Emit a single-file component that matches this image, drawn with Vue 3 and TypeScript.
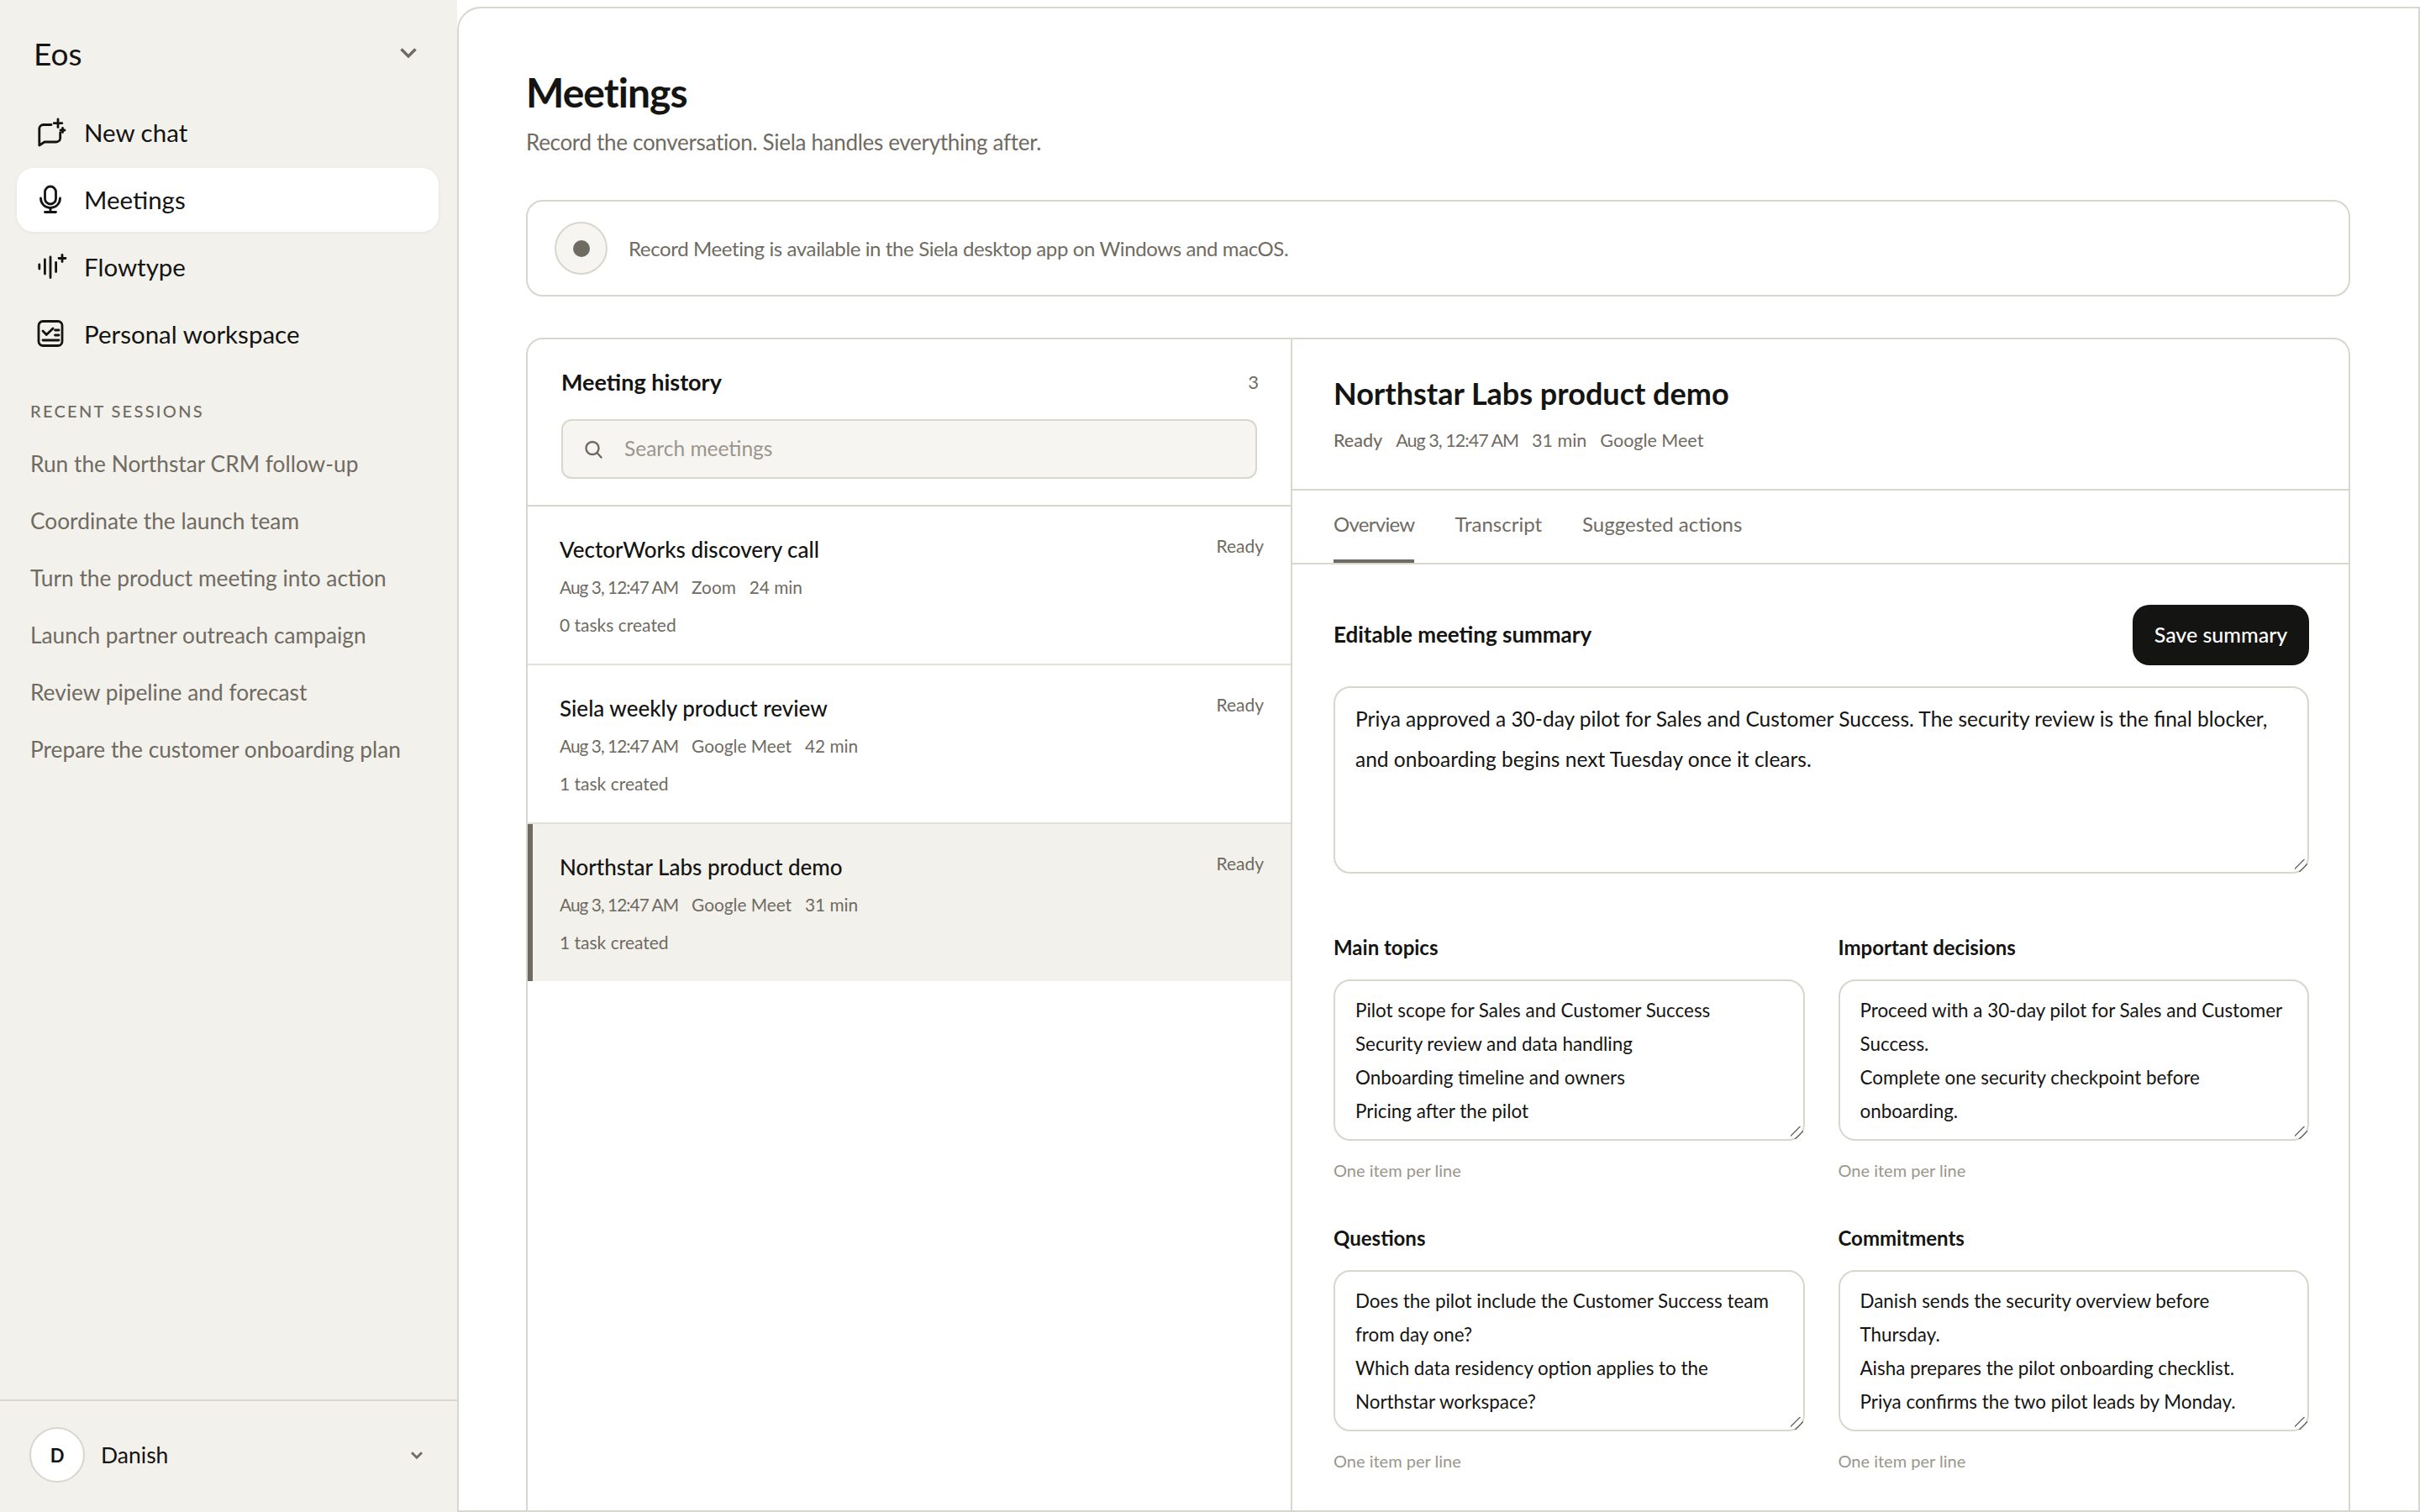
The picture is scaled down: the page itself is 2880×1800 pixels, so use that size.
<script setup lang="ts">
interface Meeting {
  title: string;
  when: string;
  source: string;
  length: string;
  tasks: string;
  selected?: boolean;
}

const sessions: string[] = [
  "Run the Northstar CRM follow-up",
  "Coordinate the launch team",
  "Turn the product meeting into action",
  "Launch partner outreach campaign",
  "Review pipeline and forecast",
  "Prepare the customer onboarding plan"
];

const meetings: Meeting[] = [
  { title: "VectorWorks discovery call", when: "Aug 3, 12:47 AM", source: "Zoom", length: "24 min", tasks: "0 tasks created" },
  { title: "Siela weekly product review", when: "Aug 3, 12:47 AM", source: "Google Meet", length: "42 min", tasks: "1 task created" },
  { title: "Northstar Labs product demo", when: "Aug 3, 12:47 AM", source: "Google Meet", length: "31 min", tasks: "1 task created", selected: true }
];

const fields = [
  {
    label: "Main topics",
    text: "Pilot scope for Sales and Customer Success\nSecurity review and data handling\nOnboarding timeline and owners\nPricing after the pilot"
  },
  {
    label: "Important decisions",
    text: "Proceed with a 30-day pilot for Sales and Customer Success.\nComplete one security checkpoint before onboarding."
  },
  {
    label: "Questions",
    text: "Does the pilot include the Customer Success team from day one?\nWhich data residency option applies to the Northstar workspace?"
  },
  {
    label: "Commitments",
    text: "Danish sends the security overview before Thursday.\nAisha prepares the pilot onboarding checklist.\nPriya confirms the two pilot leads by Monday."
  }
];
</script>

<template>
  <div class="app">
    <!--SIDEBAR-->
    <aside class="sidebar">
      <div class="brand">
        <span class="brand__name">Eos</span>
        <svg class="brand__chevron" width="20" height="12" viewBox="0 0 20 12" fill="none">
          <path d="M1.5 1.5 10 10l8.5-8.5" />
        </svg>
      </div>

      <nav class="nav">
        <a class="nav__item">
          <svg class="nav__icon" viewBox="0 0 36 36" fill="none">
            <path d="M17 8.500H7.500a4.700 4.700 0 0 0-4.700 4.700V33l6.200-4h14a4.700 4.700 0 0 0 4.700-4.700V18" />
            <path d="M25 2v9.500M20.200 6.700h9.600" />
            <path d="M30.500 12.500v5M28 15h5" />
          </svg>
          New chat
        </a>
        <a class="nav__item nav__item--active">
          <svg class="nav__icon" viewBox="0 0 36 36" fill="none">
            <rect x="9.500" y="2" width="13" height="21" rx="6.500" />
            <path d="M4.500 16a11.500 11.500 0 0 0 23 0" />
            <path d="M16 27.500V32M9.500 32.500h13" />
          </svg>
          Meetings
        </a>
        <a class="nav__item">
          <svg class="nav__icon" viewBox="0 0 36 36" fill="none">
            <path d="M2.800 15v5M9.400 9v17M16 6v24.500M22.600 12.500v11" />
            <path d="M30 3.500v8M26 7.500h8" />
          </svg>
          Flowtype
        </a>
        <a class="nav__item">
          <svg class="nav__icon" viewBox="0 0 36 36" fill="none">
            <rect x="2" y="2.500" width="28" height="29" rx="5" />
            <path d="M7 14l4.300 4.500L19 11M21.500 13H26M21.500 19H26M7 25h19" />
          </svg>
          Personal workspace
        </a>
      </nav>

      <div class="recent">
        <h2 class="recent__title">RECENT SESSIONS</h2>
        <a v-for="session in sessions" :key="session" class="recent__item">{{ session }}</a>
      </div>

      <div class="account">
        <span class="account__avatar">D</span>
        <span class="account__name">Danish</span>
        <svg class="account__chevron" width="14" height="9" viewBox="0 0 14 9" fill="none">
          <path d="M1 1.200 7 7.200l6-6" />
        </svg>
      </div>
    </aside>

    <!--MAIN-->
    <main class="main">
      <h1 class="page-title">Meetings</h1>
      <p class="page-sub">Record the conversation. Siela handles everything after.</p>

      <div class="notice">
        <span class="notice__record"><span class="notice__dot"></span></span>
        <span class="notice__text">Record Meeting is available in the Siela desktop app on Windows and macOS.</span>
      </div>

      <section class="board">
        <!--HISTORY-->
        <div class="history">
          <div class="history__head">
            <div class="history__row">
              <h2 class="history__title">Meeting history</h2>
              <span class="history__count">3</span>
            </div>
            <label class="search">
              <svg class="search__icon" width="24" height="24" viewBox="0 0 24 24" fill="none">
                <circle cx="11" cy="10.500" r="7.500" />
                <path d="M16.500 16l5 5.500" />
              </svg>
              <input class="search__input" type="text" placeholder="Search meetings" />
            </label>
          </div>

          <div
            v-for="meeting in meetings"
            :key="meeting.title"
            class="meeting"
            :class="{ 'meeting--selected': meeting.selected }"
          >
            <div class="meeting__top">
              <span class="meeting__title">{{ meeting.title }}</span>
              <span class="meeting__status">Ready</span>
            </div>
            <div class="meeting__meta">
              <span class="date">{{ meeting.when }}</span>
              <span>{{ meeting.source }}</span>
              <span>{{ meeting.length }}</span>
            </div>
            <div class="meeting__tasks">{{ meeting.tasks }}</div>
          </div>
        </div>

        <!--DETAIL-->
        <div class="detail">
          <header class="detail__head">
            <h2 class="detail__title">Northstar Labs product demo</h2>
            <div class="detail__meta">
              <span class="detail__status">Ready</span>
              <span class="date">Aug 3, 12:47 AM</span>
              <span>31 min</span>
              <span>Google Meet</span>
            </div>
          </header>

          <div class="tabs">
            <a class="tab tab--active">Overview</a>
            <a class="tab">Transcript</a>
            <a class="tab">Suggested actions</a>
          </div>

          <div class="detail__body">
            <div class="summary-head">
              <h3 class="summary-head__title">Editable meeting summary</h3>
              <button class="save" type="button">Save summary</button>
            </div>
            <textarea class="summary">Priya approved a 30-day pilot for Sales and Customer Success. The security review is the final blocker, and onboarding begins next Tuesday once it clears.</textarea>

            <div class="fields">
              <div v-for="field in fields" :key="field.label" class="field">
                <label class="field__label">{{ field.label }}</label>
                <textarea class="field__input">{{ field.text }}</textarea>
                <p class="field__hint">One item per line</p>
              </div>
            </div>
          </div>
        </div>
      </section>
    </main>
  </div>
</template>

<style scoped>
.app {
  --ink: #141412;
  --muted: #6f6b62;
  --faint: #9a968c;
  --line: #d9d6cd;
  --paper: #f3f1ec;

  display: flex;
  width: 2880px;
  height: 1800px;
  overflow: hidden;
  background: #fff;
  color: var(--ink);
  font-family: Lato, "Liberation Sans", sans-serif;
}

.sidebar {
  display: flex;
  flex-direction: column;
  flex: 0 0 544px;
  height: 1800px;
  background: var(--paper);
}

.brand {
  display: flex;
  align-items: center;
  justify-content: space-between;
  height: 72px;
  margin-top: 27px;
  padding: 0 48px 0 40px;
}

.brand__name {
  font-size: 37px;
}

.brand__chevron path {
  stroke: var(--muted);
  stroke-width: 3.4;
}

.nav {
  display: flex;
  flex-direction: column;
  gap: 4px;
  margin: 21px 22px 0 20px;
}

.nav__item {
  display: flex;
  align-items: center;
  gap: 20px;
  height: 76px;
  box-sizing: border-box;
  padding: 0 0 2px 24px;
  border-radius: 20px;
  font-size: 29.5px;
}

.nav__item--active {
  background: #fff;
  box-shadow: 0 1px 4px rgba(20, 20, 18, 0.06);
}

.nav__icon {
  flex: none;
  width: 36px;
  height: 36px;
  margin-top: 2px;
}

.nav__icon * {
  stroke: var(--ink);
  stroke-width: 2.8;
  stroke-linecap: round;
  stroke-linejoin: round;
}

.recent {
  display: flex;
  flex-direction: column;
  flex: 1;
  margin-top: 39px;
  padding-left: 36px;
}

.recent__title {
  margin: 0 0 27px;
  font-size: 20px;
  line-height: 28px;
  font-weight: 500;
  letter-spacing: 0.115em;
  color: var(--muted);
}

.recent__item {
  height: 68px;
  line-height: 44px;
  font-size: 26.3px;
  color: var(--muted);
}

.account {
  display: flex;
  align-items: center;
  height: 128px;
  padding: 0 41px 4px 35px;
  border-top: 2px solid var(--line);
}

.account__avatar {
  display: flex;
  align-items: center;
  justify-content: center;
  width: 66px;
  height: 66px;
  box-sizing: border-box;
  border: 2px solid var(--line);
  border-radius: 50%;
  background: #fff;
  font-size: 22px;
  font-weight: 700;
}

.account__name {
  flex: 1;
  margin-left: 19px;
  font-size: 26.5px;
}

.account__chevron path {
  stroke: var(--muted);
  stroke-width: 2.8;
}

.main {
  flex: 1;
  min-width: 0;
  margin-top: 8px;
  padding: 68px 81px 0 80px;
  background: #fff;
  border: 2px solid var(--line);
  border-top-left-radius: 28px;
  overflow: hidden;
}

.page-title {
  margin: 0;
  font-size: 48px;
  line-height: 64px;
  font-weight: 700;
  letter-spacing: -0.02em;
}

.page-sub {
  margin: 7px 0 0;
  font-size: 26px;
  line-height: 40px;
  letter-spacing: -0.012em;
  color: var(--muted);
}

.notice {
  display: flex;
  align-items: center;
  gap: 25px;
  height: 115px;
  margin-top: 49px;
  padding-left: 32px;
  box-sizing: border-box;
  border: 2px solid var(--line);
  border-radius: 20px;
}

.notice__record {
  display: flex;
  align-items: center;
  justify-content: center;
  width: 63px;
  height: 63px;
  box-sizing: border-box;
  border: 2px solid var(--line);
  border-radius: 50%;
  background: #f6f5f1;
}

.notice__dot {
  width: 20px;
  height: 20px;
  border-radius: 50%;
  background: var(--muted);
}

.notice__text {
  font-size: 24px;
  letter-spacing: -0.016em;
  color: var(--muted);
}

.board {
  display: flex;
  height: 1460px;
  margin-top: 49px;
  box-sizing: border-box;
  border: 2px solid var(--line);
  border-radius: 20px;
}

.history {
  flex: 0 0 910px;
  box-sizing: border-box;
  border-right: 2px solid var(--line);
}

.history__head {
  padding: 34px 40px 31px;
  border-bottom: 2px solid var(--line);
}

.history__row {
  display: flex;
  align-items: center;
  justify-content: space-between;
  height: 34px;
}

.history__title {
  margin: -2px 0 0;
  font-size: 27px;
  font-weight: 700;
}

.history__count {
  margin: -2px -2px 0 0;
  font-size: 22px;
  color: var(--muted);
}

.search {
  display: flex;
  align-items: center;
  gap: 25px;
  height: 71px;
  margin-top: 27px;
  padding-left: 24px;
  box-sizing: border-box;
  border: 2px solid var(--line);
  border-radius: 12px;
  background: #f6f5f1;
}

.search__icon * {
  stroke: var(--muted);
  stroke-width: 2.4;
  stroke-linecap: round;
}

.search__input {
  flex: 1;
  min-width: 0;
  padding: 0 0 2px;
  border: 0;
  outline: 0;
  background: transparent;
  font-family: inherit;
  font-size: 24.5px;
}

.search__input::placeholder {
  color: var(--faint);
  opacity: 1;
}

.meeting {
  padding: 33px 32px 32px 38px;
  border-bottom: 2px solid #e2e0d9;
}

.meeting--selected {
  padding-left: 32px;
  border-bottom: 0;
  border-left: 6px solid var(--muted);
  background: var(--paper);
}

.meeting__top {
  display: flex;
  align-items: flex-start;
  justify-content: space-between;
}

.meeting__title {
  font-size: 26px;
  line-height: 36px;
  font-weight: 500;
}

.meeting__status {
  font-size: 21px;
  line-height: 28px;
  color: var(--muted);
}

.meeting__meta {
  display: flex;
  gap: 16px;
  margin-top: 11px;
  font-size: 20.8px;
  line-height: 32px;
  color: var(--muted);
}

.date {
  letter-spacing: -0.045em;
}

.meeting__tasks {
  margin-top: 15px;
  font-size: 21px;
  line-height: 28px;
  color: var(--muted);
}

.detail {
  flex: 1;
  min-width: 0;
}

.detail__head {
  padding: 40px 47px 42px 49px;
  border-bottom: 2px solid var(--line);
}

.detail__title {
  margin: 0;
  font-size: 36px;
  line-height: 48px;
  font-weight: 700;
}

.detail__meta {
  display: flex;
  gap: 16px;
  margin-top: 16px;
  font-size: 21.5px;
  line-height: 32px;
  color: var(--muted);
}

.detail__status {
  font-weight: 500;
}

.tabs {
  display: flex;
  gap: 48px;
  padding-left: 49px;
  border-bottom: 2px solid var(--line);
}

.tab {
  padding: 24px 0 26px;
  border-bottom: 4px solid transparent;
  font-size: 24px;
  line-height: 32px;
  color: var(--muted);
}

.tab--active {
  border-bottom-color: var(--muted);
  letter-spacing: -0.03em;
}

.detail__body {
  padding: 48px 47px 0 49px;
}

.summary-head {
  display: flex;
  align-items: center;
  justify-content: space-between;
}

.summary-head__title {
  margin: -2px 0 0;
  font-size: 26px;
  font-weight: 700;
}

.save {
  width: 210px;
  height: 72px;
  padding: 0 0 3px;
  border: 0;
  border-radius: 20px;
  background: var(--ink);
  color: #fff;
  font-family: inherit;
  font-size: 25px;
  font-weight: 500;
}

.summary,
.field__input {
  display: block;
  width: 100%;
  box-sizing: border-box;
  border: 2px solid var(--line);
  border-radius: 20px;
  outline: 0;
  background: #fff;
  color: var(--ink);
  font-family: inherit;
  resize: vertical;
}

.summary::-webkit-resizer,
.field__input::-webkit-resizer {
  background: linear-gradient(
    135deg,
    transparent 7px,
    #6a6a6a 7.4px,
    #6a6a6a 8.4px,
    transparent 8.8px,
    transparent 13.4px,
    #6a6a6a 13.8px,
    #6a6a6a 14.8px,
    transparent 15.2px
  );
}

.summary {
  height: 223px;
  margin-top: 25px;
  padding: 13px 24px;
  font-size: 24.5px;
  line-height: 48px;
}

.fields {
  display: grid;
  grid-template-columns: 1fr 1fr;
  column-gap: 40px;
  row-gap: 51px;
  margin-top: 72px;
}

.field__label {
  display: block;
  font-size: 24px;
  line-height: 32px;
  font-weight: 700;
}

.field__input {
  height: 192px;
  margin-top: 22px;
  padding: 15px 24px 13px;
  font-size: 22.4px;
  line-height: 40px;
}

.field__hint {
  margin: 21px 0 0;
  font-size: 20px;
  line-height: 28px;
  color: var(--faint);
}
</style>

<style>
html,
body {
  margin: 0;
  background: #fff;
}
</style>
